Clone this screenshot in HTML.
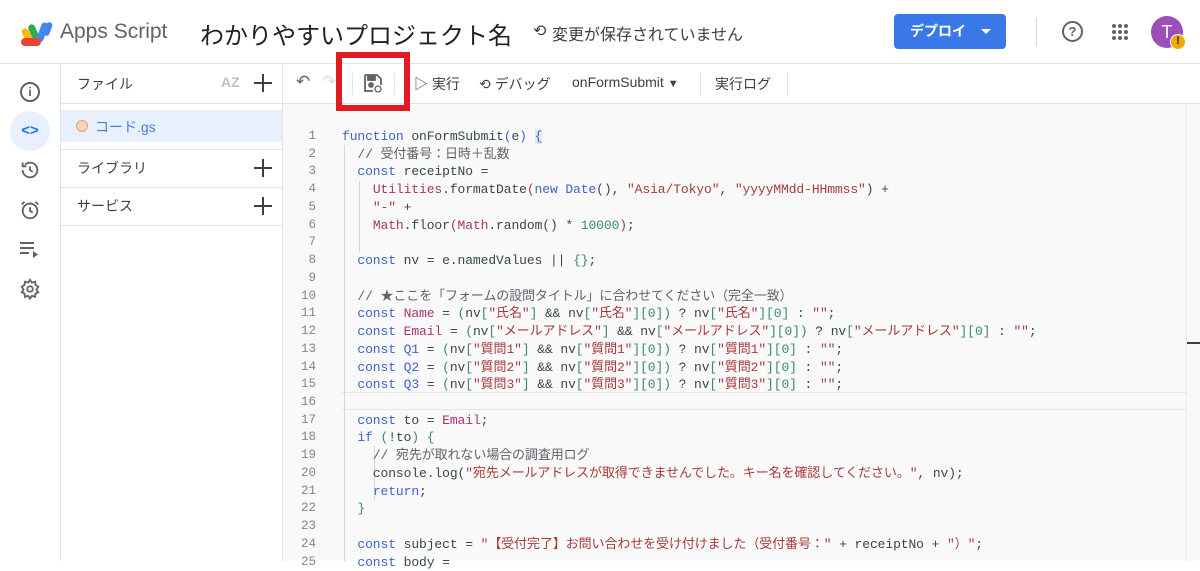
<!DOCTYPE html>
<html><head><meta charset="utf-8">
<style>
*{margin:0;padding:0;box-sizing:border-box}
body{width:1200px;height:561px;overflow:hidden;background:#fff;font-family:"Liberation Sans","Noto Sans CJK JP",sans-serif;position:relative;color:#202124}
.a{position:absolute}
.hl{position:absolute;height:1px;background:#e3e3e3}
.vl{position:absolute;width:1px;background:#e3e3e3}
.code{position:absolute;left:342px;font-family:"Liberation Mono","Noto Sans CJK JP",monospace;font-size:13px;letter-spacing:-0.1px;color:#37474f;white-space:pre;line-height:17.74px}
.ln{position:absolute;right:884px;font-family:"Liberation Mono",monospace;font-size:12.5px;color:#80868b;line-height:17.74px;text-align:right}
.k{color:#3d64cc}.s{color:#a83a3a}.n{color:#3c8a6c}.c{color:#5f6368}.v{color:#a6356b}.b{color:#3c8a6c}
.tb{position:absolute;top:74px;font-size:14px;color:#3c4043}
.plus{position:absolute;width:18px;height:18px}
.plus:before{content:"";position:absolute;left:8px;top:0;width:2px;height:18px;background:#3c4043}
.plus:after{content:"";position:absolute;left:0;top:8px;width:18px;height:2px;background:#3c4043}
</style></head><body>
<!-- header -->
<svg class="a" style="left:21px;top:20px" width="34" height="28" viewBox="0 0 34 28">
<rect x="3" y="8" width="7" height="17" rx="3.5" fill="#fbbc04" transform="rotate(-30 6 16)"/>
<rect x="10" y="4" width="7" height="20" rx="3.5" fill="#34a853" transform="rotate(-25 13 14)"/>
<rect x="18" y="2" width="7" height="20" rx="3.5" fill="#4285f4" transform="rotate(20 21 12)"/>
<rect x="0" y="18" width="20" height="8" rx="4" fill="#ea4335"/>
<rect x="24" y="2" width="6" height="14" rx="3" fill="#4285f4" transform="rotate(20 27 9)"/>
</svg>
<div class="a" style="left:60px;top:20px;font-size:21px;color:#5f6368">Apps Script</div>
<div class="a" style="left:200px;top:16px;font-size:24px;color:#202124">わかりやすいプロジェクト名</div>
<div class="a" style="left:533px;top:21px;font-size:16px;color:#3c4043">⟲</div>
<div class="a" style="left:552px;top:21px;font-size:16px;color:#3c4043">変更が保存されていません</div>
<div class="a" style="left:894px;top:14px;width:112px;height:35px;background:#3b78e7;border-radius:4px;color:#fff;font-size:14px;font-weight:bold;line-height:35px;padding-left:16px">デプロイ<span style="position:absolute;left:87px;top:15px;border:5px solid transparent;border-top:5px solid #fff"></span></div>
<div class="vl" style="left:1036px;top:18px;height:28px;background:#dadce0"></div>
<div class="a" style="left:1062px;top:21px;width:21px;height:21px;border:2px solid #5f6368;border-radius:50%;text-align:center;font-size:13px;line-height:17px;font-weight:bold;color:#5f6368">?</div>
<svg class="a" style="left:1112px;top:24px" width="16" height="16"><g fill="#5f6368"><circle cx="2" cy="2" r="2"/><circle cx="8" cy="2" r="2"/><circle cx="14" cy="2" r="2"/><circle cx="2" cy="8" r="2"/><circle cx="8" cy="8" r="2"/><circle cx="14" cy="8" r="2"/><circle cx="2" cy="14" r="2"/><circle cx="8" cy="14" r="2"/><circle cx="14" cy="14" r="2"/></g></svg>
<div class="a" style="left:1151px;top:16px;width:32px;height:32px;border-radius:50%;background:#9c4fb8;color:#fff;font-size:18px;text-align:center;line-height:32px">T</div>
<div class="a" style="left:1170px;top:34px;width:16px;height:16px;border-radius:50%;background:#f2a600;border:1.5px solid #fff;color:#202124;font-size:11px;font-weight:bold;text-align:center;line-height:13px">!</div>
<div class="hl" style="left:0;top:63px;width:1200px"></div>
<!-- left rail -->
<div class="vl" style="left:60px;top:64px;height:497px"></div>
<div class="a" style="left:20px;top:82px;width:20px;height:20px;border:2px solid #5f6368;border-radius:50%;text-align:center;font-size:12px;line-height:16px;color:#5f6368;font-weight:bold">i</div>
<div class="a" style="left:10px;top:111px;width:40px;height:40px;border-radius:50%;background:#e8f0fe;color:#1a73e8;font-size:15px;font-weight:bold;text-align:center;line-height:40px">&lt;&gt;</div>
<svg class="a" style="left:19px;top:159px" width="22" height="22" viewBox="0 0 24 24" fill="none" stroke="#5f6368" stroke-width="2"><path d="M4 12a8 8 0 1 0 2.5-5.8M4 4v4h4M12 8v4l3 2"/></svg>
<svg class="a" style="left:19px;top:199px" width="22" height="22" viewBox="0 0 24 24" fill="none" stroke="#5f6368" stroke-width="2"><circle cx="12" cy="13" r="8"/><path d="M12 9v4l3 2M3 6l3-3M21 6l-3-3"/></svg>
<svg class="a" style="left:20px;top:241px" width="22" height="18" viewBox="0 0 22 18" fill="#5f6368"><rect x="0" y="1" width="14" height="2"/><rect x="0" y="6" width="14" height="2"/><rect x="0" y="11" width="9" height="2"/><path d="M13 10l5 3.5-5 3.5z"/></svg>
<svg class="a" style="left:19px;top:278px" width="22" height="22" viewBox="0 0 24 24" fill="none" stroke="#5f6368" stroke-width="2"><circle cx="12" cy="12" r="3"/><path d="M12 2l2 3 3.5-1 .5 3.5 3 2-2 3 2 3-3 1.5-.5 3.5-3.5-1-2 3-2-3-3.5 1-.5-3.5-3-1.5 2-3-2-3 3-2 .5-3.5 3.5 1z"/></svg>
<!-- file panel -->
<div class="vl" style="left:282px;top:64px;height:497px"></div>
<div class="a" style="left:77px;top:74px;font-size:14px;color:#3c4043">ファイル</div>
<div class="a" style="left:221px;top:74px;font-size:14px;color:#bdc1c6;font-weight:bold">AZ</div>
<div class="plus" style="left:254px;top:74px"></div>
<div class="hl" style="left:61px;top:103px;width:221px"></div>
<div class="a" style="left:61px;top:110px;width:221px;height:32px;background:#e8f0fe"></div>
<div class="a" style="left:76px;top:120px;width:12px;height:12px;border-radius:50%;border:1.5px solid #e8a070;background:#fbd4b8"></div>
<div class="a" style="left:95px;top:117px;font-size:14px;color:#4a7bd8">コード.gs</div>
<div class="hl" style="left:61px;top:149px;width:221px"></div>
<div class="a" style="left:77px;top:158px;font-size:14px;color:#3c4043">ライブラリ</div>
<div class="plus" style="left:254px;top:159px"></div>
<div class="hl" style="left:61px;top:187px;width:221px"></div>
<div class="a" style="left:77px;top:196px;font-size:14px;color:#3c4043">サービス</div>
<div class="plus" style="left:254px;top:197px"></div>
<div class="hl" style="left:61px;top:225px;width:221px"></div>
<!-- editor -->
<div class="a" style="left:283px;top:104px;width:917px;height:457px;background:#f9f9fa"></div>
<div class="hl" style="left:283px;top:103px;width:917px"></div>
<div class="vl" style="left:1186px;top:104px;height:457px;background:#ececec"></div>
<div class="a" style="left:1187px;top:342px;width:13px;height:2px;background:#3c4043"></div>
<div class="a" style="left:342px;top:392px;width:844px;height:18px;border-top:1px solid #e6e6e6;border-bottom:1px solid #e6e6e6"></div>
<div class="tb" style="left:296px;font-size:17px;top:72px;color:#5f6368">↶</div>
<div class="tb" style="left:322px;font-size:17px;top:72px;color:#dadce0">↷</div>
<div class="vl" style="left:352px;top:73px;height:22px"></div>
<svg class="a" style="left:363px;top:73px" width="20" height="20" viewBox="0 0 20 20" fill="none" stroke="#5f6368" stroke-width="1.8"><path d="M2 2h12l4 4v6M2 2v16h8"/><rect x="5" y="3" width="7" height="4" fill="#5f6368"/><circle cx="8" cy="12" r="2" fill="#5f6368"/><circle cx="15" cy="16" r="3" stroke-width="1.3"/></svg>
<div class="vl" style="left:394px;top:73px;height:22px"></div>
<div class="tb" style="left:414px">▷ 実行</div>
<div class="tb" style="left:479px">⟲ デバッグ</div>
<div class="tb" style="left:572px">onFormSubmit <span style="font-size:11px">▼</span></div>
<div class="vl" style="left:700px;top:73px;height:22px"></div>
<div class="tb" style="left:715px">実行ログ</div>
<div class="vl" style="left:787px;top:73px;height:22px"></div>
<div class="a" style="left:336px;top:52px;width:74px;height:59px;border:6px solid #e01b22"></div>
<!-- indent guides -->
<div class="vl" style="left:344px;top:145px;height:416px;background:#d6d6d6"></div>
<div class="vl" style="left:359px;top:181px;height:71px;background:#d6d6d6"></div>
<div class="vl" style="left:374px;top:446px;height:54px;background:#d6d6d6"></div>
<div class="ln" style="top:128px">1<br>2<br>3<br>4<br>5<br>6<br>7<br>8<br>9<br>10<br>11<br>12<br>13<br>14<br>15<br>16<br>17<br>18<br>19<br>20<br>21<br>22<br>23<br>24<br>25</div>
<div class="code" style="top:128px"><span class="k">function</span> onFormSubmit<span class="k">(</span>e<span class="k">)</span> <span class="k" style="background:#e3e8ef">{</span>
  <span class="c">// 受付番号：日時＋乱数</span>
  <span class="k">const</span> receiptNo =
    <span class="v">Utilities</span>.formatDate<span class="s">(</span><span class="k">new</span> <span class="k">Date</span>(), <span class="s">"Asia/Tokyo"</span>, <span class="s">"yyyyMMdd-HHmmss"</span>) +
    <span class="s">"-"</span> +
    <span class="v">Math</span>.floor<span class="s">(</span><span class="v">Math</span>.random() * <span class="n">10000</span><span class="s">)</span>;

  <span class="k">const</span> nv = e.namedValues || <span class="b">{}</span>;

  <span class="c">// ★ここを「フォームの設問タイトル」に合わせてください（完全一致）</span>
  <span class="k">const</span> <span class="v">Name</span> = <span class="b">(</span>nv<span class="b">[</span><span class="s">"氏名"</span><span class="b">]</span> &amp;&amp; nv<span class="b">[</span><span class="s">"氏名"</span><span class="b">][</span><span class="n">0</span><span class="b">])</span> ? nv<span class="b">[</span><span class="s">"氏名"</span><span class="b">][</span><span class="n">0</span><span class="b">]</span> : <span class="s">""</span>;
  <span class="k">const</span> <span class="v">Email</span> = <span class="b">(</span>nv<span class="b">[</span><span class="s">"メールアドレス"</span><span class="b">]</span> &amp;&amp; nv<span class="b">[</span><span class="s">"メールアドレス"</span><span class="b">][</span><span class="n">0</span><span class="b">])</span> ? nv<span class="b">[</span><span class="s">"メールアドレス"</span><span class="b">][</span><span class="n">0</span><span class="b">]</span> : <span class="s">""</span>;
  <span class="k">const</span> <span class="k">Q1</span> = <span class="b">(</span>nv<span class="b">[</span><span class="s">"質問1"</span><span class="b">]</span> &amp;&amp; nv<span class="b">[</span><span class="s">"質問1"</span><span class="b">][</span><span class="n">0</span><span class="b">])</span> ? nv<span class="b">[</span><span class="s">"質問1"</span><span class="b">][</span><span class="n">0</span><span class="b">]</span> : <span class="s">""</span>;
  <span class="k">const</span> <span class="k">Q2</span> = <span class="b">(</span>nv<span class="b">[</span><span class="s">"質問2"</span><span class="b">]</span> &amp;&amp; nv<span class="b">[</span><span class="s">"質問2"</span><span class="b">][</span><span class="n">0</span><span class="b">])</span> ? nv<span class="b">[</span><span class="s">"質問2"</span><span class="b">][</span><span class="n">0</span><span class="b">]</span> : <span class="s">""</span>;
  <span class="k">const</span> <span class="k">Q3</span> = <span class="b">(</span>nv<span class="b">[</span><span class="s">"質問3"</span><span class="b">]</span> &amp;&amp; nv<span class="b">[</span><span class="s">"質問3"</span><span class="b">][</span><span class="n">0</span><span class="b">])</span> ? nv<span class="b">[</span><span class="s">"質問3"</span><span class="b">][</span><span class="n">0</span><span class="b">]</span> : <span class="s">""</span>;

  <span class="k">const</span> to = <span class="v">Email</span>;
  <span class="k">if</span> <span class="b">(</span>!to<span class="b">)</span> <span class="b">{</span>
    <span class="c">// 宛先が取れない場合の調査用ログ</span>
    console.log(<span class="s">"宛先メールアドレスが取得できませんでした。キー名を確認してください。"</span>, nv);
    <span class="k">return</span>;
  <span class="b">}</span>

  <span class="k">const</span> subject = <span class="s">"【受付完了】お問い合わせを受け付けました（受付番号："</span> + receiptNo + <span class="s">"）"</span>;
  <span class="k">const</span> body =</div>
</body></html>
